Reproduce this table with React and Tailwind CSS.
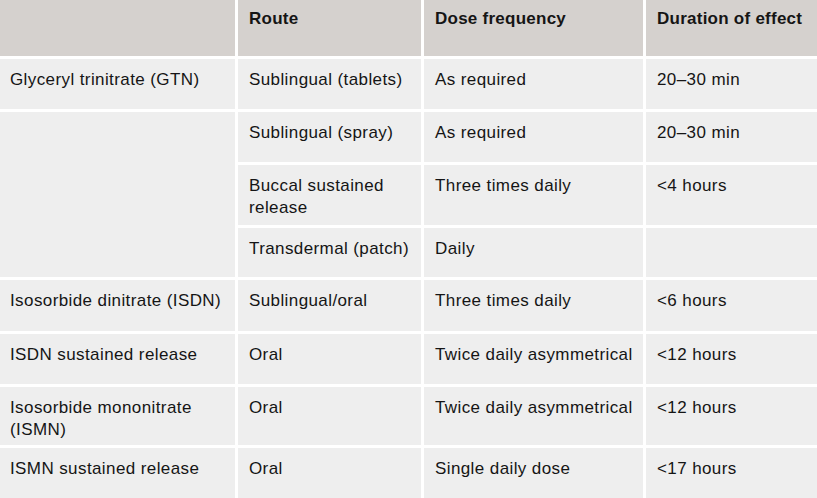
const header = ['', 'Route', 'Dose frequency', 'Duration of effect']

// each cell: [text, col, row, rowSpan]
const cells = [
  ['Glyceryl trinitrate (GTN)', 1, 2],
  ['Sublingual (tablets)', 2, 2],
  ['As required', 3, 2],
  ['20–30 min', 4, 2],
  ['', 1, 3, 3],
  ['Sublingual (spray)', 2, 3],
  ['As required', 3, 3],
  ['20–30 min', 4, 3],
  ['Buccal sustained release', 2, 4],
  ['Three times daily', 3, 4],
  ['<4 hours', 4, 4],
  ['Transdermal (patch)', 2, 5],
  ['Daily', 3, 5],
  ['', 4, 5],
  ['Isosorbide dinitrate (ISDN)', 1, 6],
  ['Sublingual/oral', 2, 6],
  ['Three times daily', 3, 6],
  ['<6 hours', 4, 6],
  ['ISDN sustained release', 1, 7],
  ['Oral', 2, 7],
  ['Twice daily asymmetrical', 3, 7],
  ['<12 hours', 4, 7],
  ['Isosorbide mononitrate (ISMN)', 1, 8],
  ['Oral', 2, 8],
  ['Twice daily asymmetrical', 3, 8],
  ['<12 hours', 4, 8],
  ['ISMN sustained release', 1, 9],
  ['Oral', 2, 9],
  ['Single daily dose', 3, 9],
  ['<17 hours', 4, 9],
]

export default function App() {
  return (
    <div
      className="w-[817px] h-[498px] bg-white text-[#151515] text-[17px] leading-[22px]"
      style={{ fontFamily: '"Liberation Sans", Arial, sans-serif' }}
    >
      <div className="grid grid-cols-[235px_183px_219px_1fr] grid-rows-[56px_50px_50px_60px_49px_51px_50px_58px_50px] gap-[3px] h-full">
        {header.map((h, i) => (
          <div
            key={i}
            className={`bg-[#d5d1ce] font-bold tracking-[0.25px] pt-[8px] ${i === 0 ? 'pl-[10px]' : 'pl-[11px]'}`}
          >
            {h}
          </div>
        ))}
        {cells.map(([text, col, row, span], i) => (
          <div
            key={i}
            className={`bg-[#eeeeee] tracking-[0.4px] pt-[10px] pr-2 ${col === 1 ? 'pl-[10px]' : 'pl-[11px]'}`}
            style={{ gridColumn: col, gridRow: span ? `${row} / span ${span}` : row }}
          >
            {text}
          </div>
        ))}
      </div>
    </div>
  )
}
